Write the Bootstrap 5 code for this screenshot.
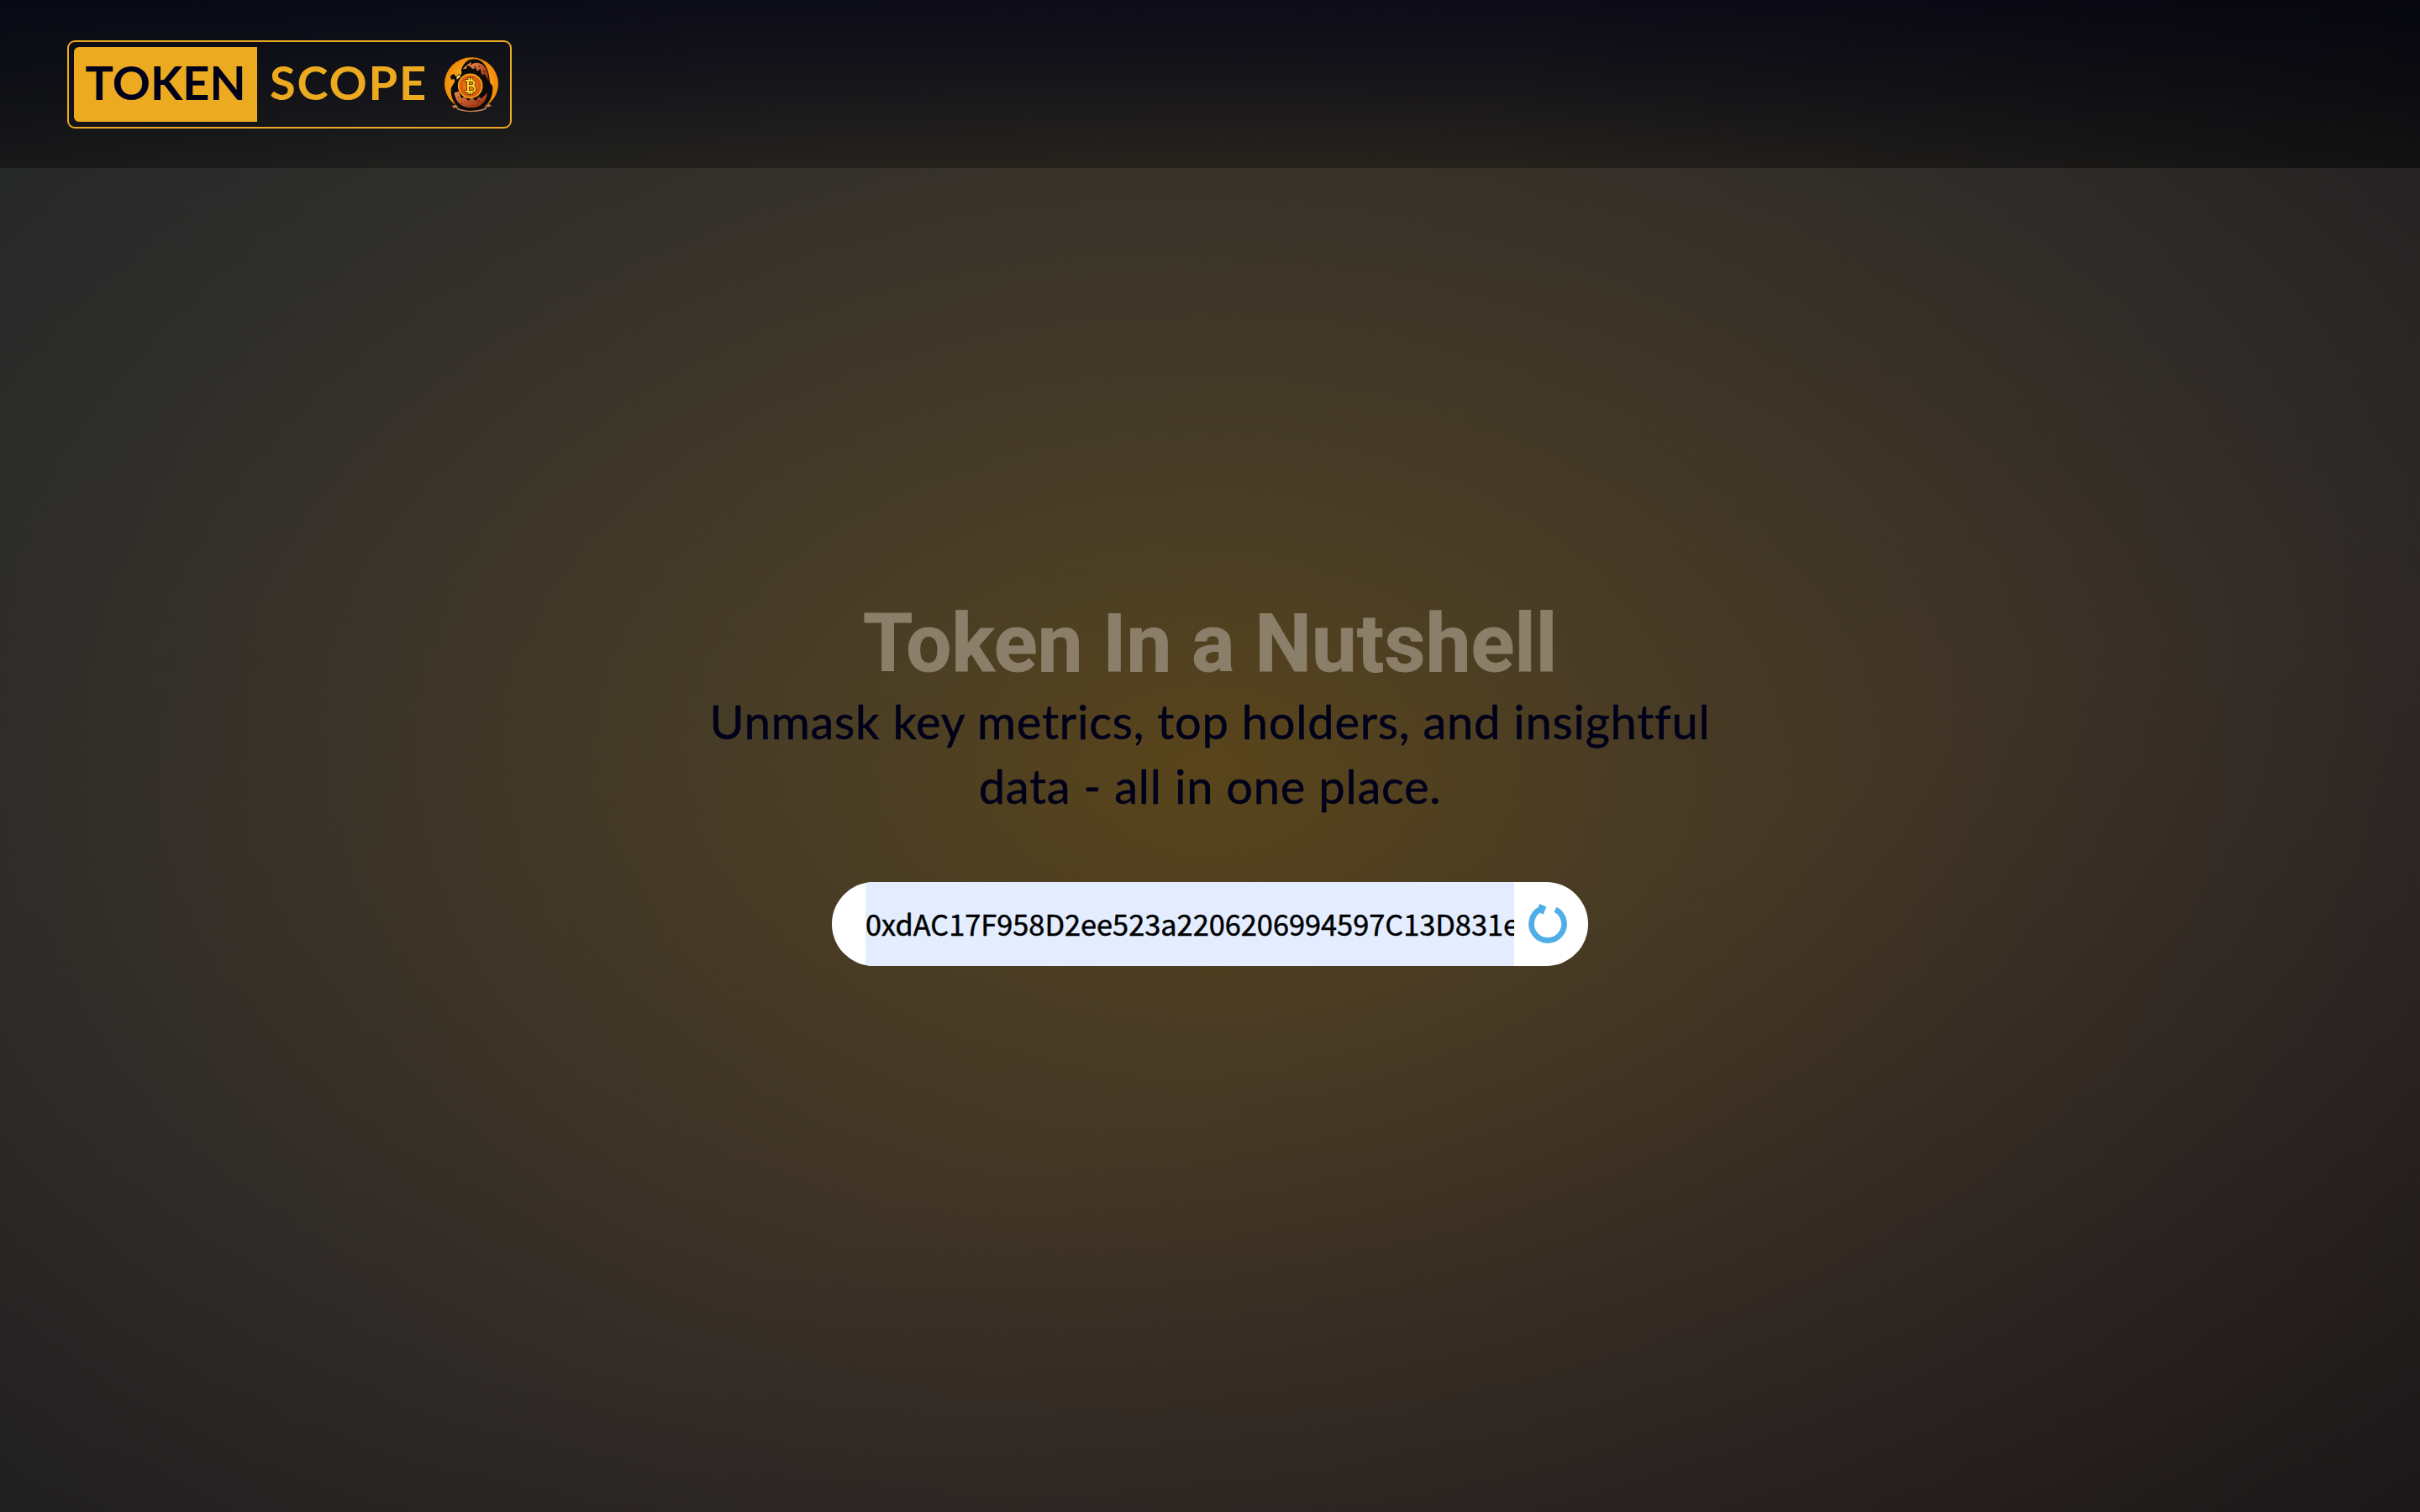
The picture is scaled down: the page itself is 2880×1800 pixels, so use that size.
<!DOCTYPE html>
<html lang="en">
<head>
<meta charset="utf-8">
<meta name="viewport" content="width=device-width, initial-scale=1">
<title>Token Scope</title>
<link href="https://cdn.jsdelivr.net/npm/bootstrap@5.3.0/dist/css/bootstrap.min.css" rel="stylesheet">
<style>
:root { --gold: #ecaa20; --ink: #00001a; }
body { font-family: Lato, "Noto Sans", sans-serif; color: var(--ink); background: #00000f; }
.backdrop-glow {
  background:
    linear-gradient(155deg, rgba(44,62,60,.22) 0%, rgba(44,52,40,.1) 40%, rgba(40,20,16,.06) 62%, rgba(20,6,6,.32) 100%),
    radial-gradient(farthest-corner at 50% 51%, #5d471a 0%, #4d3f24 22%, #403528 46%, #2e2a28 72%, #1f1e20 100%);
}
.site-header {
  height: 200px; padding: 0 80px;
  background:
    linear-gradient(90deg, rgba(0,0,0,.12), rgba(0,0,0,0) 25%, rgba(0,0,0,0) 60%, rgba(0,0,0,.28)),
    linear-gradient(180deg, rgba(0,0,18,.74) 0%, rgba(0,0,12,.54) 50%, rgba(0,0,0,.3) 100%);
}
.brand-frame { width: 529px; height: 105px; border: 2px solid var(--gold); border-radius: 9px; padding: 6px; font-size: 56px; font-weight: 700; line-height: 1; }
.brand-token { width: 218px; background: var(--gold); color: var(--ink); border-radius: 6px 0 0 6px; padding-bottom: 4px; }
.brand-scope { color: var(--gold); margin-left: 15px; width: 192px; padding-bottom: 4px; letter-spacing: 1.8px; }
.brand-egg { width: 64px; height: 66px; margin-left: 16px; margin-top: 2px; }
.hero-block { padding-top: 518px; }
.hero-title { font-family: Roboto, sans-serif; font-size: 96px; font-weight: 700; line-height: 96px; color: #8b7f6a; -webkit-text-stroke: .8px #8b7f6a; }
.hero-text { font-size: 56px; line-height: 77px; margin: 6px 0 76px; white-space: nowrap; letter-spacing: .77px; -webkit-text-stroke: .5px var(--ink); }
.search-pill { width: 900px; height: 100px; padding-left: 40px; background: #fff; }
.search-input { width: 772px; height: 100px; border: 0; padding: 0 0 2px; color: #000; background: #e4edff; font-family: "Noto Sans CJK SC", sans-serif; font-size: 34.35px; -webkit-text-stroke: .5px #000; }
.search-reload { width: 60px; height: 60px; margin-left: 10px; }
</style>
</head>
<body>
<div class="backdrop-glow vh-100 d-flex flex-column overflow-hidden">
  <header class="site-header d-flex align-items-center flex-shrink-0">
    <a href="#" class="brand-frame d-flex align-items-center text-decoration-none">
      <span class="brand-token h-100 d-flex align-items-center justify-content-center">TOKEN</span>
      <span class="brand-scope">SCOPE</span>
      <svg class="brand-egg flex-shrink-0" viewBox="42 38 192 198" role="img" aria-label="Hatching coin">
        <defs>
          <radialGradient id="sun"><stop offset=".4" stop-color="#ffb01c"/><stop offset="1" stop-color="#f28a08"/></radialGradient>
          <linearGradient id="shell" x1="0" y1="0" x2="1" y2="1"><stop offset="0" stop-color="#e98a50"/><stop offset="1" stop-color="#8e1e06"/></linearGradient>
          <radialGradient id="coin"><stop offset="0" stop-color="#f08a10"/><stop offset="1" stop-color="#dc560c"/></radialGradient>
        </defs>
        <ellipse cx="138" cy="218" rx="52" ry="13" fill="none" stroke="#c9875a" stroke-width="5"/>
        <path d="M66 212l20-5 8 8-18 6zM186 214l14-10 12 7-14 7z" fill="#c9875a" stroke="#1a0b06" stroke-width="2"/>
        <ellipse cx="138" cy="133" rx="96" ry="94" fill="url(#sun)"/>
        <path d="M102 83C110 57 128 44 150 45c33 2 52 36 54 84l10 14c2 49-25 86-79 86-48 0-72-35-70-80l10-18 28-34z" fill="#0c0a0a"/>
        <path d="M131 71c12-14 28-17 43-8 16 9 26 34 26 60l-16-25-9 4-5-22-10 8-8-12-8 5z" fill="url(#shell)"/>
        <path d="M107 80l19-17 13-8-6 15-9-2-5 12z" fill="#e0854f"/>
        <path d="M77 165l17-4 8 24 12-7 13 16 13-12 13 12 12-15 9 7 21-20c-5 33-24 51-55 53-36 1-59-19-63-54z" fill="url(#shell)"/>
        <path d="M63 106l11-9 9 10 12-10 6 10-21 22-4-13-10 2z" fill="#0c0a0a"/>
        <path d="M85 107l11-7 3 8-13 10z" fill="#ffdc68"/>
        <circle cx="134" cy="141" r="42" fill="url(#coin)" stroke="#f2ac1c" stroke-width="5"/>
        <circle cx="134" cy="141" r="32" fill="none" stroke="#a8480a" stroke-width="2" stroke-dasharray="5 3"/>
        <g fill="none" stroke-linecap="square" stroke-linejoin="round">
          <path d="M126 123v37M119 122h17q12 0 12 9t-12 9h-9m9 0q15 1 15 11t-15 10h-17M130 115v7M139 115v7M130 162v6M139 162v6" stroke="#572003" stroke-width="10"/>
          <path d="M126 123v37M119 122h17q12 0 12 9t-12 9h-9m9 0q15 1 15 11t-15 10h-17M130 115v7M139 115v7M130 162v6M139 162v6" stroke="#ffd832" stroke-width="6"/>
        </g>
        <path d="M146 73l7-3 2 7zM163 68l7 2-3 5zM181 84l7 4-3 6zM90 177l4 3-3 4zM101 202l6-1-2 6zM160 194l7-2-4 7z" fill="#53200e"/>
      </svg>
    </a>
  </header>
  <main class="hero-block d-flex flex-column align-items-center text-center">
    <h1 class="hero-title mb-0">Token In a Nutshell</h1>
    <p class="hero-text">Unmask key metrics, top holders, and insightful<br>data - all in one place.</p>
    <form class="search-pill rounded-pill d-flex align-items-center overflow-hidden">
      <input class="search-input flex-shrink-0" value="0xdAC17F958D2ee523a2206206994597C13D831ec7" aria-label="Token address">
      <svg class="search-reload flex-shrink-0" viewBox="-30 -30 60 60" aria-hidden="true">
        <path d="M9 -17.3A19.5 19.5 0 1 1 -8 -17.8" fill="none" stroke="#4fade8" stroke-width="6.8"/>
        <path d="M-10 -24L-1.7 -20.4L-5.3 -11.6L-13 -15z" fill="#4fade8"/>
      </svg>
    </form>
  </main>
</div>
<script src="https://cdn.jsdelivr.net/npm/bootstrap@5.3.0/dist/js/bootstrap.bundle.min.js"></script>
</body>
</html>
